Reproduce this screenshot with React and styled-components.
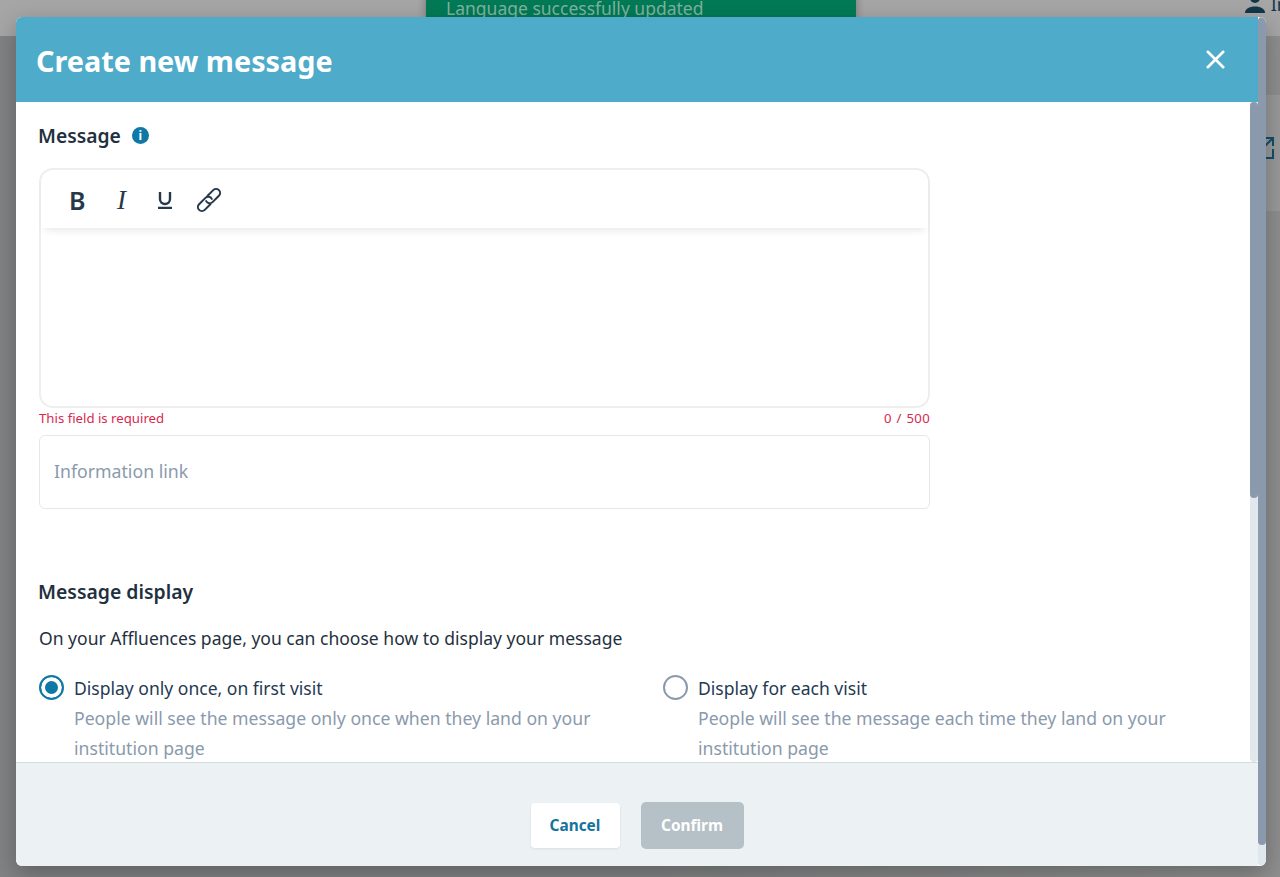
import React from 'react'
import styled, { createGlobalStyle } from 'styled-components'
import { X } from 'lucide-react'

const GlobalStyle = createGlobalStyle`
  html, body { margin: 0; padding: 0; height: 100%; overflow: hidden; }
  body { font-family: "Noto Sans", "Open Sans", sans-serif; }
  * { box-sizing: border-box; }
`

function App() {
  return (
    <Page>
      <GlobalStyle />
      <TopBar>
        <UserBlock>
          <svg width="22" height="22" viewBox="0 0 22 22" fill="#1c5572">
            <circle cx="11" cy="7" r="5" />
            <path d="M1 22c0-4 4-6.500 10-6.500s10 2.500 10 6.500z" />
          </svg>
          <span>In</span>
        </UserBlock>
      </TopBar>
      <SideBand>
        <svg width="24" height="24" viewBox="0 0 24 24" fill="none" stroke="#1a7aa8" strokeWidth="2">
          <path d="M14 2h9v8M23 2l-9 9M23 13v9H12" />
        </svg>
      </SideBand>
      <Backdrop />
      <Toast>Language successfully updated</Toast>
      <Modal>
        <ModalHeader>
          <ModalTitle>Create new message</ModalTitle>
          <CloseButton><X size={31} strokeWidth={2} color="#fff" /></CloseButton>
        </ModalHeader>
        <ModalBody>
          <Content>
            <LabelRow>
              <SectionLabel>Message</SectionLabel>
              <InfoDot>i</InfoDot>
            </LabelRow>
            <Editor>
              <EditorToolbar>
                <ToolB>B</ToolB>
                <ToolI>I</ToolI>
                <ToolU>
                  <svg width="14" height="17" viewBox="0 0 14 17" fill="none" stroke="#26384a" strokeWidth="2.4">
                    <path d="M2 0v7a5 5 0 0 0 10 0V0" />
                    <path d="M0 16h14" />
                  </svg>
                </ToolU>
                <ToolLink>
                  <svg width="24" height="24" viewBox="0 0 24 24" fill="none" stroke="#26384a" strokeWidth="2" strokeLinecap="round">
                    <g transform="rotate(-45 12 12)">
                      <path d="M10 16H2a4 4 0 0 1 0-8H11a4 4 0 0 1 3.800 5.200" />
                      <path d="M14 8H22a4 4 0 0 1 0 8H13a4 4 0 0 1-3.800-5.200" />
                    </g>
                  </svg>
                </ToolLink>
              </EditorToolbar>
            </Editor>
            <HelperRow>
              <span>This field is required</span>
              <Counter>0 / 500</Counter>
            </HelperRow>
            <LinkField>Information link</LinkField>
            <DisplayTitle>Message display</DisplayTitle>
            <Intro>On your Affluences page, you can choose how to display your message</Intro>
            <Options>
              <Option>
                <Radio $checked />
                <OptionText>
                  <OptionName>Display only once, on first visit</OptionName>
                  <OptionHint>People will see the message only once when they land on your institution page</OptionHint>
                </OptionText>
              </Option>
              <Option>
                <Radio />
                <OptionText>
                  <OptionName>Display for each visit</OptionName>
                  <OptionHint>People will see the message each time they land on your institution page</OptionHint>
                </OptionText>
              </Option>
            </Options>
          </Content>
          <Track $height="660px"><Thumb $height="396px" /></Track>
        </ModalBody>
        <ModalFooter>
          <CancelButton>Cancel</CancelButton>
          <ConfirmButton>Confirm</ConfirmButton>
        </ModalFooter>
        <OuterTrack><Thumb $height="828px" /></OuterTrack>
      </Modal>
    </Page>
  )
}

export default App

const Page = styled.div`
  position: relative;
  width: 1280px;
  height: 877px;
  overflow: hidden;
  background: linear-gradient(90deg, #c8cacb 0%, #c8cacb 50%, #dcdcdc 100%);
`
const TopBar = styled.div`
  height: 36px;
  background: #fff;
  display: flex;
  justify-content: flex-end;
`
const UserBlock = styled.div`
  display: flex;
  align-items: flex-end;
  gap: 5px;
  margin-top: -9px;
  height: 22px;
  margin-right: -8px;
  font-size: 18px;
  color: #1c5572;
  span { line-height: 18px; }
`
const SideBand = styled.div`
  width: 60px;
  height: 116px;
  margin: 59px 0 0 auto;
  padding: 41px 6px 0 0;
  background: #ededed;
  display: flex;
  justify-content: flex-end;
`
const Backdrop = styled.div`
  position: absolute;
  inset: 0;
  background: rgba(0, 0, 0, 0.35);
`
const Toast = styled.div`
  position: absolute;
  top: -7px;
  left: 426px;
  width: 430px;
  height: 24px;
  background: #027a55;
  color: #7fb3a0;
  font-size: 17.5px;
  line-height: 30px;
  padding-left: 20px;
  box-shadow: 0 2px 8px rgba(0, 0, 0, 0.3);
`
const Modal = styled.div`
  position: absolute;
  left: 16px;
  top: 17px;
  width: 1250px;
  height: 849px;
  display: flex;
  flex-direction: column;
  background: #fff;
  border-radius: 6px;
  overflow: hidden;
  padding-right: 8px;
  box-shadow: 0 8px 24px rgba(0, 0, 0, 0.28);
`
const ModalHeader = styled.div`
  height: 85px;
  flex: none;
  background: #4eabc9;
  display: flex;
  align-items: center;
  justify-content: space-between;
  padding: 2px 27px 0 20px;
`
const ModalTitle = styled.h1`
  margin: 0;
  font-family: "Noto Sans", sans-serif;
  font-size: 28.8px;
  font-weight: 700;
  color: #fff;
`
const CloseButton = styled.div`
  display: flex;
  margin-top: -3px;
`
const ModalBody = styled.div`
  flex: 1;
  min-height: 0;
  position: relative;
  overflow: hidden;
`
const Content = styled.div`
  padding: 21px 0 0 23px;
  width: 1234px;
`
const LabelRow = styled.div`
  display: flex;
  align-items: center;
  gap: 11px;
  height: 24px;
`
const SectionLabel = styled.div`
  margin-left: -1px;
  font-size: 19.3px;
  font-weight: 600;
  color: #1f3140;
`
const InfoDot = styled.span`
  width: 17px;
  height: 17px;
  border-radius: 50%;
  background: #0f79a6;
  color: #fff;
  font-size: 12px;
  font-weight: 700;
  line-height: 17px;
  text-align: center;
`
const Editor = styled.div`
  margin-top: 21px;
  width: 891px;
  height: 240px;
  border: 2px solid #eeeeee;
  border-radius: 14px;
`
const EditorToolbar = styled.div`
  height: 58px;
  display: flex;
  align-items: center;
  padding: 2px 14px 0 28px;
  box-shadow: 0 6px 8px -4px rgba(0, 0, 0, 0.1);
`
const ToolB = styled.span`
  width: 48px;
  font-family: "Noto Sans", sans-serif;
  font-weight: 600;
  font-size: 25px;
  color: #26384a;
`
const ToolI = styled.span`
  width: 41px;
  font-family: "Liberation Serif", serif;
  font-style: italic;
  font-size: 27px;
  color: #26384a;
`
const ToolU = styled.span`
  width: 39px;
  display: flex;
`
const ToolLink = styled.span`
  display: flex;
  svg { overflow: visible; }
`
const HelperRow = styled.div`
  width: 891px;
  display: flex;
  justify-content: space-between;
  margin-top: 1px;
  height: 26px;
  font-size: 13.2px;
  line-height: 18px;
  color: #d8294f;
`
const Counter = styled.span`
  word-spacing: 1px;
  letter-spacing: 0.3px;
`
const LinkField = styled.div`
  width: 891px;
  height: 74px;
  border: 1px solid #e1e9ef;
  border-radius: 6px;
  padding: 0 0 2px 14px;
  display: flex;
  align-items: center;
  font-size: 17.7px;
  color: #8a9aac;
`
const DisplayTitle = styled.div`
  margin-top: 69px;
  margin-left: -1px;
  font-size: 19.4px;
  font-weight: 600;
  color: #1f3140;
`
const Intro = styled.div`
  margin-top: 21px;
  font-size: 17.55px;
  color: #1f3140;
`
const Options = styled.div`
  display: grid;
  grid-template-columns: 624px 560px;
  margin-top: 23px;
`
const Option = styled.div`
  display: flex;
  gap: 10px;
`
const Radio = styled.span`
  flex: none;
  width: 25px;
  height: 25px;
  margin-top: 2px;
  border-radius: 50%;
  border: 2px solid ${p => (p.$checked ? '#0f79a6' : '#8a9aac')};
  background: ${p => (p.$checked ? '#0f79a6' : '#fff')};
  box-shadow: ${p => (p.$checked ? 'inset 0 0 0 4px #fff' : 'none')};
`
const OptionText = styled.div`
  width: 520px;
  font-size: 17.55px;
  line-height: 30px;
`
const OptionName = styled.div`
  color: #1f3a52;
`
const OptionHint = styled.div`
  font-size: 17.65px;
  color: #8a9aac;
`
const Track = styled.div`
  position: absolute;
  top: 0;
  right: 0;
  width: 8px;
  height: ${p => p.$height};
  background: #e0e8ee;
  border-radius: 0 0 4px 4px;
`
const Thumb = styled.div`
  width: 8px;
  height: ${p => p.$height};
  background: #8a9aac;
  border-radius: 4px;
`
const ModalFooter = styled.div`
  height: 104px;
  flex: none;
  background: #ecf1f4;
  border-top: 1px solid #d5dadd;
  display: flex;
  align-items: center;
  justify-content: center;
  gap: 21px;
  padding-top: 21px;
`
const CancelButton = styled.div`
  width: 89px;
  height: 45px;
  background: #fff;
  border-radius: 4px;
  box-shadow: 0 1px 3px rgba(0, 0, 0, 0.08);
  display: flex;
  align-items: center;
  justify-content: center;
  font-size: 15.4px;
  font-weight: 700;
  color: #15739c;
`
const ConfirmButton = styled.div`
  width: 103px;
  height: 47px;
  background: #b5c1c7;
  border-radius: 5px;
  display: flex;
  align-items: center;
  justify-content: center;
  font-size: 15.4px;
  font-weight: 700;
  color: #fff;
`
const OuterTrack = styled.div`
  position: absolute;
  top: 0;
  right: 0;
  width: 8px;
  height: 849px;
  background: #e0e8ee;
  border-radius: 4px;
`
